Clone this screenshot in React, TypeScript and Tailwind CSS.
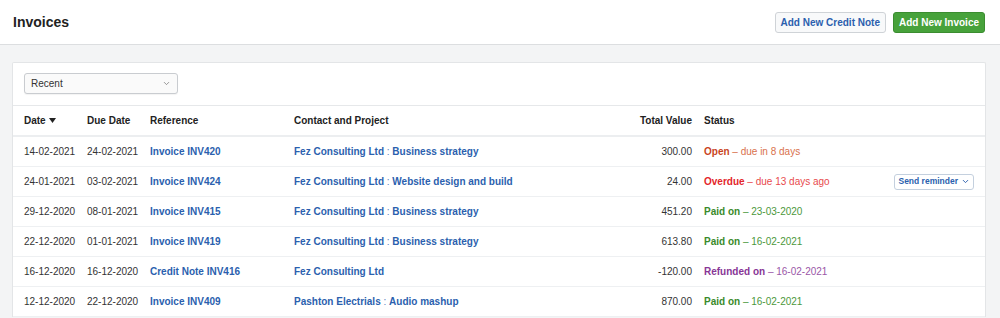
import { ChevronDown } from "lucide-react"

type Row = {
  date: string
  due: string
  ref: string
  contact: string
  project?: string
  total: string
  status: "open" | "overdue" | "paid" | "refunded"
  label: string
  note: string
  remind?: boolean
}

const rows: Row[] = [
  { date: "14-02-2021", due: "24-02-2021", ref: "Invoice INV420", contact: "Fez Consulting Ltd", project: "Business strategy", total: "300.00", status: "open", label: "Open", note: "due in 8 days" },
  { date: "24-01-2021", due: "03-02-2021", ref: "Invoice INV424", contact: "Fez Consulting Ltd", project: "Website design and build", total: "24.00", status: "overdue", label: "Overdue", note: "due 13 days ago", remind: true },
  { date: "29-12-2020", due: "08-01-2021", ref: "Invoice INV415", contact: "Fez Consulting Ltd", project: "Business strategy", total: "451.20", status: "paid", label: "Paid on", note: "23-03-2020" },
  { date: "22-12-2020", due: "01-01-2021", ref: "Invoice INV419", contact: "Fez Consulting Ltd", project: "Business strategy", total: "613.80", status: "paid", label: "Paid on", note: "16-02-2021" },
  { date: "16-12-2020", due: "16-12-2020", ref: "Credit Note INV416", contact: "Fez Consulting Ltd", total: "-120.00", status: "refunded", label: "Refunded on", note: "16-02-2021" },
  { date: "12-12-2020", due: "22-12-2020", ref: "Invoice INV409", contact: "Pashton Electrials", project: "Audio mashup", total: "870.00", status: "paid", label: "Paid on", note: "16-02-2021" },
]

const statusStyles = {
  open: { strong: "text-[#c9441d]", light: "text-[#d9714c]" },
  overdue: { strong: "text-[#e3262b]", light: "text-[#e84a4d]" },
  paid: { strong: "text-[#3a8a2b]", light: "text-[#4b983c]" },
  refunded: { strong: "text-[#883696]", light: "text-[#9a57a7]" },
}

export default function App() {
  return (
    <div className="min-h-[318px] bg-[#f3f4f5] font-['Liberation_Sans',Arial,sans-serif] text-[10px] text-[#333]">
      <header className="flex h-[45px] items-center justify-between border-b border-[#dcdee0] bg-white pl-[13px] pr-[15px]">
        <h1 className="text-[14px] font-bold text-[#222]">Invoices</h1>
        <div className="flex gap-[7px]">
          <button className="h-[21px] rounded-[3px] border border-[#cfd3d7] bg-[#f8f9fa] px-[5px] text-[10px] font-bold text-[#2b5fae]">
            Add New Credit Note
          </button>
          <button className="h-[21px] rounded-[3px] border border-[#3b8d30] bg-[#47a23b] px-[5px] text-[10px] font-bold text-white">
            Add New Invoice
          </button>
        </div>
      </header>

      <div className="px-3 pt-[17px]">
        <div className="w-[974px] rounded-t-[2px] border border-b-0 border-[#e3e5e7] bg-white">
          <div className="border-b border-[#e6e8ea] px-[11px] pt-[10px] pb-[11px]">
            <div className="flex h-[21px] w-[154px] items-center justify-between rounded-[3px] border border-[#c9ccd0] bg-[#fafafa] pl-[6px] pr-[6px] text-[10px] text-[#333] shadow-[0_1px_1px_rgba(0,0,0,0.05)]">
              <span>Recent</span>
              <ChevronDown size={9} strokeWidth={2} className="text-[#777]" />
            </div>
          </div>

          <div className="flex h-[31px] items-center border-b-2 border-[#eceef0] px-[11px] font-bold text-[#222]">
            <div className="flex w-[63px] items-center gap-[3px]">
              Date
              <svg width="7" height="5" viewBox="0 0 7 5"><path d="M0 0h7L3.5 5z" fill="#222" /></svg>
            </div>
            <div className="w-[63px]">Due Date</div>
            <div className="w-[144px]">Reference</div>
            <div className="w-[300px]">Contact and Project</div>
            <div className="w-[98px] text-right">Total Value</div>
            <div className="pl-3">Status</div>
          </div>

          {rows.map((r, i) => (
            <div key={i} className="flex h-[30px] items-center border-b border-[#eef0f2] px-[11px]">
              <div className="w-[63px]">{r.date}</div>
              <div className="w-[63px]">{r.due}</div>
              <div className="w-[144px] font-bold text-[#2b5fae]">{r.ref}</div>
              <div className="w-[300px] font-bold text-[#2b5fae]">
                {r.contact}
                {r.project && (
                  <>
                    <span className="font-normal text-[#5b80bd]"> : </span>
                    {r.project}
                  </>
                )}
              </div>
              <div className="w-[98px] text-right">{r.total}</div>
              <div className="flex flex-1 items-center justify-between pl-3">
                <span>
                  <span className={`font-bold ${statusStyles[r.status].strong}`}>{r.label}</span>
                  <span className={statusStyles[r.status].light}> – {r.note}</span>
                </span>
                {r.remind && (
                  <button className="flex h-[16px] items-center gap-[3px] rounded-[3px] border border-[#c4d0de] bg-white px-[3px] text-[8.5px] font-bold text-[#2b5fae]">
                    Send reminder
                    <ChevronDown size={9} strokeWidth={2.5} />
                  </button>
                )}
              </div>
            </div>
          ))}
        </div>
      </div>
    </div>
  )
}
